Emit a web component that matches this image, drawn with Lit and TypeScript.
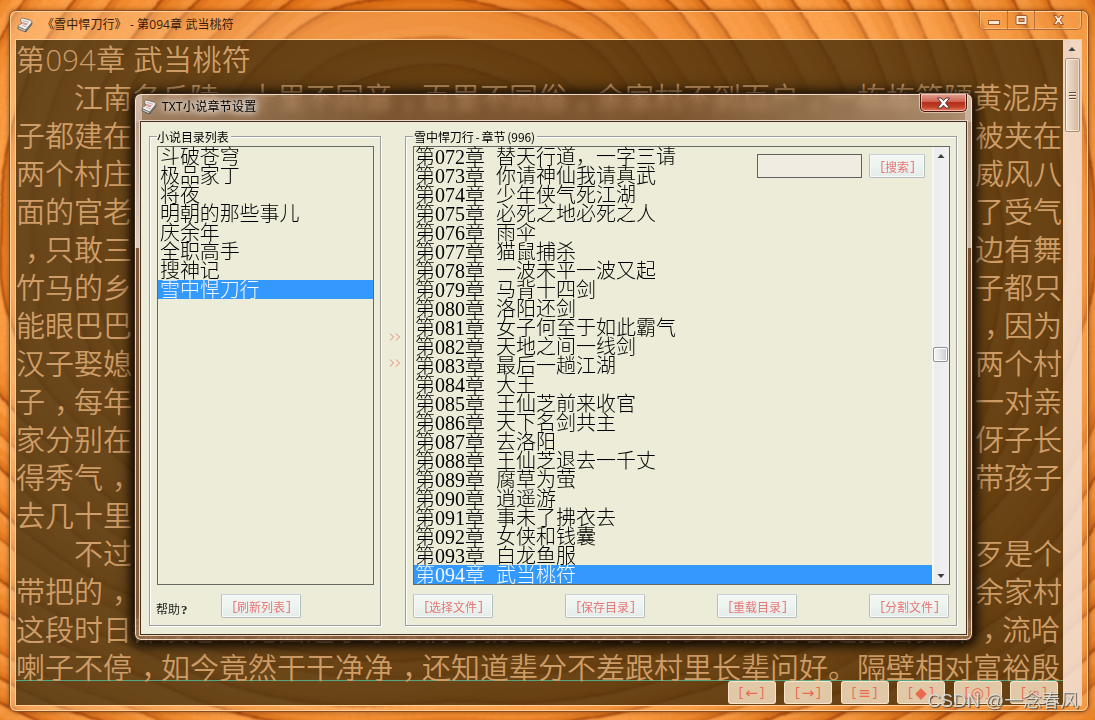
import { LitElement, html, svg, css } from "lit";
import { customElement, property } from "lit/decorators.js";

const BOOKS = ["斗破苍穹", "极品家丁", "将夜", "明朝的那些事儿", "庆余年", "全职高手", "搜神记", "雪中悍刀行"];

const CHAPTERS = [
  "替天行道，一字三请", "你请神仙我请真武", "少年侠气死江湖", "必死之地必死之人", "雨伞", "猫鼠捕杀",
  "一波未平一波又起", "马背十四剑", "洛阳还剑", "女子何至于如此霸气", "天地之间一线剑", "最后一趟江湖",
  "大王", "王仙芝前来收官", "天下名剑共主", "去洛阳", "王仙芝退去一千丈", "腐草为萤", "逍遥游",
  "事未了拂衣去", "女侠和钱囊", "白龙鱼服", "武当桃符",
].map((name, i) => `第0${72 + i}章 ${name}`);

const LINES: [string, string][] = [
  ["第094章 武当桃符", ""],
  ["　　江南名丘陵，十里不同音，百里不同俗，余家村不到百户，一栋栋简陋黄泥房", ""],
  ["子都建在", "被夹在"],
  ["两个村庄", "威风八"],
  ["面的官老", "了受气"],
  ["，只敢三", "边有舞"],
  ["竹马的乡", "子都只"],
  ["能眼巴巴", "，因为"],
  ["汉子娶媳", "两个村"],
  ["子，每年", "一对亲"],
  ["家分别在", "伢子长"],
  ["得秀气，", "带孩子"],
  ["去几十里", ""],
  ["　　不过", "歹是个"],
  ["带把的，", "余家村"],
  ["这段时日都没怎么见面这小家伙们可就已经长大了不少以前他总是拖着鼻涕，流哈", ""],
  ["喇子不停，如今竟然干干净净，还知道辈分不差跟村里长辈问好。隔壁相对富裕殷", ""],
];

@customElement("wood-grain")
class WoodGrain extends LitElement {
  static styles = css`
    :host { display: block; position: absolute; inset: 0; }
    svg { display: block; }
  `;
  render() {
    const ring = (r: number) =>
      `M${435 - r} 250A${r} ${r} 0 0 1 ${435 + r} 250A${r} ${r * 0.73} 0 0 1 ${435 - r} 250Z`;
    const rings = [];
    const steps = [27, 34, 24, 38, 30, 42, 28];
    let r = 60;
    for (let i = 0; r < 980; i++) {
      const strong = i % 3 !== 2;
      rings.push(svg`
        <path d=${ring(r - 8)} stroke="#d2600c" stroke-opacity=".2" stroke-width="16" />
        <path d=${ring(r - 3)} stroke="#c04c04" stroke-opacity=".28" stroke-width="7" />
        <path d=${ring(r)} stroke="#8a2f00" stroke-opacity=${strong ? 0.72 : 0.45} stroke-width=${strong ? 2.4 : 1.8} />
        <path d=${ring(r + 7)} stroke="#ffb468" stroke-opacity=".14" stroke-width="8" />`);
      r += steps[i % steps.length];
    }
    return html`<svg width="1095" height="720" viewBox="0 0 1095 720">
      <defs>
        <radialGradient id="base" gradientUnits="userSpaceOnUse" cx="435" cy="250" r="720">
          <stop offset="0" stop-color="#d97a2a" /><stop offset=".38" stop-color="#ee8128" />
          <stop offset=".6" stop-color="#fc9a42" /><stop offset="1" stop-color="#f08e36" />
        </radialGradient>
        <filter id="warp" x="-5%" y="-5%" width="110%" height="110%">
          <feTurbulence type="fractalNoise" baseFrequency=".005" numOctaves="2" seed="4" result="n" />
          <feDisplacementMap in="SourceGraphic" in2="n" scale="26" xChannelSelector="R" yChannelSelector="G" result="d" />
          <feGaussianBlur in="d" stdDeviation=".9" />
        </filter>
        <filter id="speck" x="0" y="0" width="100%" height="100%">
          <feTurbulence type="fractalNoise" baseFrequency=".25" numOctaves="2" seed="9" />
          <feColorMatrix values="0 0 0 0 .6  0 0 0 0 .22  0 0 0 0 0  .9 0 0 0 -.34" />
        </filter>
      </defs>
      <rect width="1095" height="720" fill="url(#base)" />
      <g filter="url(#warp)" fill="none">${rings}</g>
      <rect width="1095" height="720" filter="url(#speck)" opacity=".4" />
    </svg>`;
  }
}

@customElement("book-icon")
class BookIcon extends LitElement {
  static styles = css`:host { display: block; width: 16px; height: 16px; } svg { display: block; }`;
  render() {
    return html`<svg width="16" height="16" viewBox="0 0 16 16">
      <path d="M1.2 9.2L9 12.6L8.6 15L1 11.8Z" fill="#c9ccc8" stroke="#55504c" stroke-width=".8" />
      <path d="M9 12.6L15 5.2L14.6 8L8.6 15Z" fill="#7b8287" stroke="#4c5255" stroke-width=".7" />
      <path d="M3.6 2.2Q4.6 .6 6.4 1.2L13.4 3.2Q15.4 4 14.6 5.8L9.6 12Q8.8 13 7.6 12.5L1.4 9.6Q1 8.6 2.4 7.8L5.4 6Q3 4.4 3.6 2.2Z" fill="#f1eeea" stroke="#6a625d" stroke-width=".8" />
      <path d="M5.4 3.4L12 5.2M4.8 8L9.6 10" stroke="#b9aaa6" stroke-width=".9" />
      <path d="M6.2 5L11 6.4L9.4 8.5L5.6 7Z" fill="#dc9c9a" />
    </svg>`;
  }
}

@customElement("skin-button")
class SkinButton extends LitElement {
  @property() label = "";
  static styles = css`
    :host {
      display: flex; align-items: center; justify-content: center; box-sizing: border-box;
      width: 80px; height: 24px; border: 1px solid #b4bcbc; border-top-color: #c3d0d4; border-radius: 2px;
      background: linear-gradient(#f4f7f4, #edf3ef 50%, #e3ece9); box-shadow: inset 0 0 0 1px #f8fbfa;
      color: #e57777; font: 12px/12px "Noto Sans CJK SC", sans-serif; white-space: nowrap;
    }
    .br { font: 12px/12px "Liberation Mono", monospace; width: 6px; padding-top: 1px; }
    .txt { padding-top: 2px; }
  `;
  render() {
    return html`<span class="br">[</span><span class="txt">${this.label}</span><span class="br">]</span>`;
  }
}

@customElement("scroll-arrow")
class ScrollArrow extends LitElement {
  @property({ type: Boolean }) down = false;
  static styles = css`:host { display: block; width: 8px; height: 4px; } svg { display: block; }`;
  render() {
    return html`<svg width="8" height="4" viewBox="0 0 8 4"><path d=${this.down ? "M.5 0H7.5L4 4Z" : "M.5 4H7.5L4 0Z"} fill="#3f3f3c" /></svg>`;
  }
}

@customElement("reader-window")
class ReaderWindow extends LitElement {
  static styles = css`
    :host {
      position: absolute; left: 9px; top: 10px; width: 1080px; height: 702px; box-sizing: border-box;
      display: flex; flex-direction: column; border: 1px solid #8e4c1c; border-radius: 7px;
      box-shadow: inset 0 0 0 1px #ffd2a0, 0 0 5px rgba(70, 25, 0, .55);
      background: linear-gradient(90deg, rgba(255, 210, 160, .42), rgba(255, 180, 105, .25) 50%, rgba(255, 180, 105, .3));
      padding: 0 6px 5px 5px;
    }
    .title { display: flex; height: 28px; align-items: flex-start; padding-left: 1px; }
    .icon { padding: 6px 9px 0 1px; }
    .name { font: 12px/14px "Open Sans", "Noto Sans CJK SC", sans-serif; color: #3a1a0a; padding-top: 7px; flex: 1; white-space: pre; letter-spacing: .1px; }
    .caps {
      display: flex; width: 103px; height: 19px; box-sizing: border-box; border: 1px solid #b06c38; border-top: 0;
      border-radius: 0 0 5px 5px; box-shadow: inset 0 0 0 1px rgba(255, 215, 165, .5);
    }
    .cap { display: flex; align-items: center; justify-content: center; border-right: 1px solid #b8743c; box-sizing: border-box; width: 28px; }
    .cap.mid { width: 27px; }
    .cap.last { flex: 1; border: 0; }
    .client {
      flex: 1; display: flex; box-sizing: border-box; border: 1px solid #ffcb96; min-height: 0;
    }
    .page { flex: 1; display: flex; flex-direction: column; min-width: 0; background: rgba(62, 40, 5, .77); }
    .text { height: 641px; box-sizing: border-box; border-bottom: 1px solid #55a681; padding-top: 1px; flex: none; }
    .line {
      display: flex; justify-content: space-between; height: 38px; width: 1046px; white-space: pre; color: #cf9d68;
      font: 350 29px/38px "Open Sans", "Noto Sans CJK SC", sans-serif;
    }
    .line:first-child { letter-spacing: .4px; }
    .comma { display: inline-block; width: 29px; text-indent: 9px; }
    .tools { display: flex; gap: 8.5px; justify-content: flex-end; padding-right: 5px; }
    .tool {
      width: 48px; height: 23px; box-sizing: border-box; border-radius: 3px; border: 1px solid rgba(255, 238, 215, .75);
      background: rgba(248, 226, 195, .84); color: #ea6a50; display: flex; align-items: center; justify-content: center;
      font: 12px/12px "Liberation Mono", monospace;
    }
    .sym { width: 12px; font: 15px/12px "DejaVu Sans", sans-serif; margin: 0 1px; display: flex; justify-content: center; }
    .bar { width: 18px; background: rgba(241, 225, 216, .84); display: flex; flex-direction: column; align-items: center; flex: none; }
    .up { padding: 7px 0; }
    .thumb {
      width: 15px; height: 74px; box-sizing: border-box; border: 1px solid #a88c78; border-radius: 2px; box-shadow: inset 0 0 0 1px rgba(255, 248, 238, .6);
      background: linear-gradient(90deg, #f1dfca, #e2cbb5 50%, #d3b59a); display: flex; flex-direction: column; gap: 2px; align-items: center; justify-content: center;
    }
    .grip { width: 7px; height: 1px; background: #5e4c40; box-shadow: 0 1px #f5e8da; }
  `;
  private glyphs(s: string) {
    return s.split(/(，)/).map((p) => (p === "，" ? html`<span class="comma">，</span>` : p));
  }
  render() {
    const st = "#9a5c30";
    return html`
      <div class="title">
        <div class="icon"><book-icon></book-icon></div>
        <div class="name">《雪中悍刀行》 - 第094章 武当桃符</div>
        <div class="caps">
          <div class="cap"><svg width="14" height="12" viewBox="0 0 14 12"><rect x="1.5" y="6.5" width="11" height="4" fill="#fbe6d0" stroke=${st} /></svg></div>
          <div class="cap mid"><svg width="13" height="12" viewBox="0 0 13 12"><rect x="1" y="1.5" width="11" height="9" rx="1" fill="#fbe6d0" stroke=${st} /><rect x="4" y="4.5" width="5" height="3" fill="#e79653" stroke=${st} /></svg></div>
          <div class="cap last"><svg width="13" height="12" viewBox="0 0 13 12"><path d="M1.5 1.5H4.5L6.5 4L8.5 1.5H11.5L8.3 6L11.5 10.5H8.5L6.5 8L4.5 10.5H1.5L4.7 6Z" fill="#fbe6d0" stroke=${st} /></svg></div>
        </div>
      </div>
      <div class="client">
        <div class="page">
          <div class="text">${LINES.map(([a, b]) => html`<div class="line"><span>${this.glyphs(a)}</span><span>${this.glyphs(b)}</span></div>`)}</div>
          <div class="tools">${["←", "→", "≡", "◆", "◎", "∞"].map((s) => html`<div class="tool">[<span class="sym">${s}</span>]</div>`)}</div>
        </div>
        <div class="bar">
          <div class="up"><scroll-arrow></scroll-arrow></div>
          <div class="thumb"><div class="grip"></div><div class="grip"></div><div class="grip"></div></div>
        </div>
      </div>`;
  }
}

@customElement("chapter-dialog")
class ChapterDialog extends LitElement {
  static styles = css`
    :host {
      position: absolute; left: 134px; top: 93px; width: 839px; height: 548px; box-sizing: border-box;
      border: 1px solid #3a2415; border-radius: 7px; padding: 0 5px 5px; display: flex; flex-direction: column;
      backdrop-filter: blur(4px);
      background:
        linear-gradient(rgba(255, 250, 245, .4), rgba(255, 250, 245, .72)) 0 0 / 7px 154px no-repeat,
        linear-gradient(rgba(255, 250, 245, .3), rgba(255, 250, 245, .6)) 100% 0 / 7px 154px no-repeat,
        linear-gradient(90deg, rgba(255, 240, 230, .25), rgba(255, 240, 230, 0) 30%, rgba(255, 240, 230, 0) 65%, rgba(255, 235, 215, .35)) 0 0 / 100% 28px no-repeat,
        rgba(150, 112, 86, .48);
      box-shadow: inset 0 0 0 1px rgba(255, 238, 222, .85), 0 2px 10px 3px rgba(0, 0, 0, .75), 0 0 18px 4px rgba(0, 0, 0, .4);
      font: 12px/14px "Noto Sans CJK SC", sans-serif; color: #000;
    }
    .title { height: 26px; display: flex; align-items: flex-start; }
    .icon { padding: 5px 4px 0 1px; }
    .name {
      font: 12px/14px "Open Sans", "Noto Sans CJK SC", sans-serif; padding: 6px 2px 0 1px; white-space: nowrap; letter-spacing: .25px;
      text-shadow: 0 0 6px #fff, 0 0 9px #fff, 0 0 12px rgba(255, 255, 255, .8);
    }
    .space { flex: 1; }
    .close {
      width: 47px; height: 18px; box-sizing: border-box; border: 1px solid #4a1710; border-top: 0; border-radius: 0 0 5px 5px;
      background: linear-gradient(#e3a192, #cf6351 45%, #b52e1b 50%, #c23f26 75%, #e37e5c);
      box-shadow: inset 0 0 0 1px rgba(255, 205, 190, .7), 0 0 0 1px rgba(255, 235, 225, .55);
      display: flex; align-items: center; justify-content: center;
    }
    .client {
      flex: 1; min-height: 0; background: #ececd8; border: 1px solid #452e20; box-shadow: 0 0 0 1px #e9d6c6;
      margin: 1px 0 0; padding: 14px 9px 8px 8px; display: flex; gap: 5px; box-sizing: border-box;
    }
    .group {
      box-sizing: border-box; border: 1px solid #9c9d9c; box-shadow: 1px 1px #fff, inset 1px 1px #fff;
      padding: 0 6px 7px 7px; display: flex; flex-direction: column; height: 490px;
    }
    .left { width: 232px; }
    .right { flex: 1; }
    .legend { height: 9px; display: flex; flex: none; }
    .legend span { background: #ececd8; height: 14px; line-height: 14px; margin-top: -7px; padding: 0 2px 0 1px; white-space: nowrap; word-spacing: -.8px; letter-spacing: -.05px; }
    .left .legend span { padding-left: 0; }
    .list {
      height: 439px; box-sizing: border-box; border: 1px solid #666963; flex: none; display: flex; position: relative;
    }
    .rows { flex: 1; min-width: 0; }
    .row {
      height: 19px; padding-left: 1px; white-space: pre; word-spacing: 6px;
      font: 300 20px/21px "Liberation Serif", "Noto Sans CJK SC", serif;
    }
    .left .row { padding-left: 2px; letter-spacing: -.1px; }
    .on { background: #3399ff; color: #f4f8ff; }
    .sb { width: 17px; background: linear-gradient(90deg, #f8f8f6, #ececec 20%, #f1f1f1); display: flex; flex-direction: column; align-items: center; box-sizing: border-box; padding: 7px 0 6px; }
    .thumb { width: 15px; height: 15px; box-sizing: border-box; border: 1px solid #8f9193; border-radius: 2px; background: linear-gradient(90deg, #f6f6f6, #e3e3e5 50%, #c8c9cc); margin-top: 189px; box-shadow: inset 0 0 0 1px #fff; }
    .search { position: absolute; right: 24px; top: 7px; display: flex; gap: 7px; }
    .input { width: 105px; height: 24px; box-sizing: border-box; border: 1px solid #5f615e; background: #f0ece1; }
    .search skin-button { width: 56px; }
    .foot { display: flex; justify-content: space-between; padding-top: 9px; }
    .left .foot { justify-content: flex-start; }
    .right .foot { padding-right: 1px; }
    .help { width: 65px; padding-top: 8px; color: #222; margin-left: -1px; }
    .help b { font-family: "Liberation Serif", serif; font-size: 13px; padding-left: 1px; }
    .moves {
      width: 14px; display: flex; flex-direction: column; gap: 18px; padding: 197px 0 0 3px; align-items: center; box-sizing: border-box;
    }
    .moves svg { display: block; flex: none; }
  `;
  private arrows() {
    return html`<svg width="12" height="8" viewBox="0 0 12 8"><path d="M1 .5L4.5 4L1 7.5M7 .5L10.5 4L7 7.5" fill="none" stroke="#e98678" /></svg>`;
  }
  render() {
    return html`
      <div class="title">
        <div class="icon"><book-icon></book-icon></div>
        <div class="name">TXT小说章节设置</div>
        <div class="space"></div>
        <div class="close"><svg width="15" height="12" viewBox="0 0 15 12"><path d="M1.5 1H5L7.5 3.7L10 1H13.5L9.6 6L13.5 11H10L7.5 8.2L5 11H1.5L5.4 6Z" fill="#fff" stroke="#5b3532" /></svg></div>
      </div>
      <div class="client">
        <div class="group left">
          <div class="legend"><span>小说目录列表</span></div>
          <div class="list"><div class="rows">${BOOKS.map((b, i) => html`<div class="row ${i === 7 ? "on" : ""}">${b}</div>`)}</div></div>
          <div class="foot"><div class="help">帮助<b>?</b></div><skin-button label="刷新列表"></skin-button></div>
        </div>
        <div class="moves">${this.arrows()}${this.arrows()}</div>
        <div class="group right">
          <div class="legend"><span>雪中悍刀行 - 章节 (996)</span></div>
          <div class="list">
            <div class="rows">${CHAPTERS.map((c, i) => html`<div class="row ${i === 22 ? "on" : ""}">${c}</div>`)}</div>
            <div class="sb">
              <scroll-arrow></scroll-arrow><div class="thumb"></div><div class="space"></div><scroll-arrow down></scroll-arrow>
            </div>
            <div class="search"><div class="input"></div><skin-button label="搜索"></skin-button></div>
          </div>
          <div class="foot">${["选择文件", "保存目录", "重载目录", "分割文件"].map((l) => html`<skin-button label=${l}></skin-button>`)}</div>
        </div>
      </div>`;
  }
}

@customElement("app-root")
class AppRoot extends LitElement {
  static styles = css`
    :host { display: block; position: relative; width: 1095px; height: 720px; overflow: hidden; }
    .mark {
      position: absolute; right: 16px; bottom: 8px; font: 350 18.7px/22px "Liberation Sans", "Noto Sans CJK SC", sans-serif; color: #deded8;
      text-shadow: 1px 1px 1px #4c4034; white-space: nowrap; opacity: .92;
    }
  `;
  render() {
    return html`<wood-grain></wood-grain><reader-window></reader-window><chapter-dialog></chapter-dialog><div class="mark">CSDN @一念春风</div>`;
  }
}
